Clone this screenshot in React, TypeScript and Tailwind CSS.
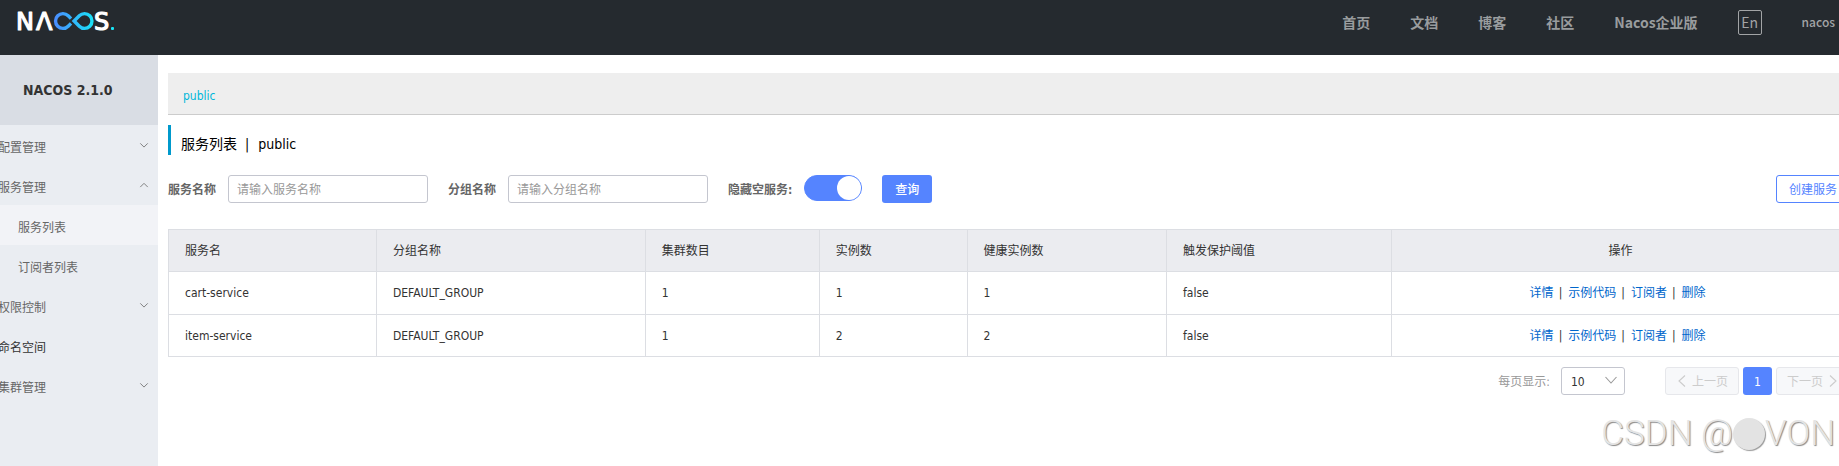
import { useState } from "react";

type MenuItem = { label: string; open?: boolean; leaf?: boolean; children?: string[] };

const NAV = ["首页", "文档", "博客", "社区", "Nacos企业版"];

const MENU: MenuItem[] = [
  { label: "配置管理" },
  { label: "服务管理", open: true, children: ["服务列表", "订阅者列表"] },
  { label: "权限控制" },
  { label: "命名空间", leaf: true },
  { label: "集群管理" },
];

const COLUMNS = [
  { label: "服务名", width: "w-[12.37%]" },
  { label: "分组名称", width: "w-[15.99%]" },
  { label: "集群数目", width: "w-[10.35%]" },
  { label: "实例数", width: "w-[8.8%]" },
  { label: "健康实例数", width: "w-[11.86%]" },
  { label: "触发保护阈值", width: "w-[13.4%]" },
];

const ROWS = [
  ["cart-service", "DEFAULT_GROUP", "1", "1", "1", "false"],
  ["item-service", "DEFAULT_GROUP", "1", "2", "2", "false"],
];

const ACTIONS = ["详情", "示例代码", "订阅者", "删除"];

function Chevron({ d, className }: { d: string; className: string }) {
  return (
    <svg className={className} viewBox="0 0 12 12" fill="none" stroke="currentColor" strokeWidth="1.1" aria-hidden="true">
      <path d={d} />
    </svg>
  );
}

function Logo() {
  return (
    <svg width="106" height="42" viewBox="0 0 106 42" role="img" aria-label="NACOS">
      <defs>
        <linearGradient id="loop" gradientUnits="userSpaceOnUse" x1="40" y1="0" x2="80" y2="0">
          <stop offset="0" stopColor="#4b8bff" />
          <stop offset="1" stopColor="#18e4f7" />
        </linearGradient>
      </defs>
      <g fill="#fff" stroke="#fff" strokeWidth="1.2" strokeLinejoin="round" fontFamily="DejaVu Sans, sans-serif" fontSize="24">
        <text x="2" y="29">N</text>
        <text x="22" y="29">Λ</text>
        <text x="80" y="29">S</text>
      </g>
      <g fill="none" stroke="url(#loop)" strokeWidth="3.4">
        <path d="M57 17.6L54.2 14.8A7.4 7.4 0 1 0 54.2 25.2L57 22.4" />
        <path d="M60.1 20L65.3 14.8A7.4 7.4 0 1 1 65.3 25.2Z" />
      </g>
      <rect x="97" y="26" width="3" height="3" rx="1" fill="#18e4f7" />
    </svg>
  );
}

function Header() {
  return (
    <header className="flex h-[55px] items-start justify-between bg-[#252a2f] font-['Noto_Sans_CJK_SC',sans-serif] text-sm text-[#a2a4a6]">
      <a href="#" className="mt-px ml-3.5">
        <Logo />
      </a>
      <nav className="mr-1 flex h-11 items-center gap-10 font-bold text-[#999c9e]">
        {NAV.map((label) => (
          <a key={label} href="#">
            {label}
          </a>
        ))}
        <button className="flex h-[25px] w-6 items-center justify-center rounded-xs border border-[#a2a4a6] font-normal text-[#a2a4a6]">
          En
        </button>
        <a href="#" className="text-xs font-medium text-[#a2a4a6]">
          nacos
        </a>
      </nav>
    </header>
  );
}

function Sidebar() {
  return (
    <aside className="w-[158px] shrink-0 bg-[#eaedf2]">
      <h1 className="h-[70px] bg-[#d9dde4] pl-[23px] text-sm leading-[70px] font-bold text-[#333]">NACOS 2.1.0</h1>
      <ul className="text-[#666]">
        {MENU.map((item) => (
          <li key={item.label}>
            <a
              href="#"
              className={`-ml-0.5 flex h-10 items-center justify-between pr-[9px] ${item.leaf ? "text-[#333]" : ""}`}
            >
              <span className="pt-1.5">{item.label}</span>
              {!item.leaf && (
                <Chevron d={item.open ? "M1.5 8.5L6 4L10.5 8.5" : "M1.5 4L6 8.5L10.5 4"} className="size-2.5 text-[#777]" />
              )}
            </a>
            {item.children?.map((child, i) => (
              <a key={child} href="#" className={`flex h-10 items-center pt-1.5 pl-[18px] ${i === 0 ? "bg-[#f2f3f7]" : ""}`}>
                {child}
              </a>
            ))}
          </li>
        ))}
      </ul>
    </aside>
  );
}

function Filters() {
  const [hideEmpty, setHideEmpty] = useState(true);
  const label = "mr-3 pt-0.5 font-bold text-[#666]";
  const input = "mr-5 h-7 w-[200px] rounded-[3px] border border-[#c4c6cf] px-2 pt-0.5 text-[#333] outline-none placeholder:text-[#999]";

  return (
    <form className="mt-5 flex items-center" onSubmit={(e) => e.preventDefault()}>
      <label htmlFor="service" className={label}>
        服务名称
      </label>
      <input id="service" placeholder="请输入服务名称" className={input} />
      <label htmlFor="group" className={label}>
        分组名称
      </label>
      <input id="group" placeholder="请输入分组名称" className={input} />
      <label htmlFor="hide-empty" className={label}>
        隐藏空服务:
      </label>
      <input
        id="hide-empty"
        type="checkbox"
        role="switch"
        checked={hideEmpty}
        onChange={(e) => setHideEmpty(e.target.checked)}
        className="mr-5 mb-0.5 flex h-[26px] w-[58px] cursor-pointer appearance-none rounded-full border border-[#5584ff] bg-[#c4c6cf] before:size-6 before:rounded-full before:bg-white checked:justify-end checked:bg-[#5584ff]"
      />
      <button className="h-7 w-[50px] rounded-[3px] bg-[#5584ff] pt-0.5 font-medium text-white">查询</button>
      <button type="button" className="ml-auto h-7 w-[74px] rounded-[3px] border border-[#5584ff] pt-0.5 text-[#5584ff]">
        创建服务
      </button>
    </form>
  );
}

function ServiceTable() {
  return (
    <table className="mt-[26px] w-full table-fixed border-collapse text-left text-[#333]">
      <thead>
        <tr className="h-[42px] bg-[#ebecf0]">
          {COLUMNS.map((col) => (
            <th key={col.label} className={`border border-[#dcdee3] px-4 font-normal ${col.width}`}>
              {col.label}
            </th>
          ))}
          <th className="border border-[#dcdee3] text-center font-normal">操作</th>
        </tr>
      </thead>
      <tbody>
        {ROWS.map((row) => (
          <tr key={row[0]} className="h-[43px] last:h-[42px]">
            {row.map((cell, i) => (
              <td key={i} className="border border-[#dcdee3] px-4">
                {cell}
              </td>
            ))}
            <td className="border border-[#dcdee3] pr-1.5 text-center">
              {ACTIONS.map((action, i) => (
                <span key={action}>
                  {i > 0 && <span className="mr-1.5 ml-[5px]">|</span>}
                  <a href="#" className="text-[#06c]">
                    {action}
                  </a>
                </span>
              ))}
            </td>
          </tr>
        ))}
      </tbody>
    </table>
  );
}

function Pager() {
  const step =
    "flex h-7 w-[74px] items-center justify-center gap-1 rounded-[3px] border border-[#e6e7eb] bg-[#f7f8fa] text-[#ccc]";

  return (
    <div className="mt-2.5 flex items-center justify-end">
      <label htmlFor="page-size" className="mr-[11px] pt-0.5 text-[#999]">
        每页显示:
      </label>
      <div className="relative mr-10">
        <select
          id="page-size"
          className="block h-7 w-16 appearance-none rounded-[3px] border border-[#c4c6cf] bg-white pt-0.5 pl-[9px] text-[#333]"
        >
          <option>10</option>
          <option>20</option>
          <option>50</option>
        </select>
        <Chevron d="M0.5 2L6 8L11.5 2" className="pointer-events-none absolute top-2 right-2 size-3 text-[#999]" />
      </div>
      <div className="flex gap-1">
        <button disabled className={step}>
          <Chevron d="M9 0.5L3 6L9 11.5" className="size-3" />
          <span className="pt-0.5">上一页</span>
        </button>
        <button className="h-7 w-[29px] rounded-[3px] bg-[#5584ff] pt-0.5 text-white">1</button>
        <button disabled className={step}>
          <span className="pt-0.5">下一页</span>
          <Chevron d="M3 0.5L9 6L3 11.5" className="size-3" />
        </button>
      </div>
    </div>
  );
}

export default function App() {
  return (
    <div className="relative flex min-h-screen flex-col overflow-hidden bg-white font-['DejaVu_Sans_Condensed','Noto_Sans_CJK_SC',sans-serif] text-xs">
      <Header />
      <div className="flex flex-1">
        <Sidebar />
        {/* the content column is a little wider than the window */}
        <main className="-mr-[11px] min-w-0 flex-1 pt-[18px] pl-2.5">
          <div className="flex h-[42px] items-center border-b border-[#ccc] bg-[#eee] pt-1 pl-[15px] text-[#00b7d9]">
            <a href="#">public</a>
          </div>
          <h2 className="mt-2.5 flex h-[30px] items-center border-l-3 border-[#09c] pt-2 pl-2.5 text-sm text-black">
            <span>服务列表</span>
            <span className="mr-[9px] ml-2">|</span>
            <span>public</span>
          </h2>
          <Filters />
          <ServiceTable />
          <Pager />
        </main>
      </div>
      <div className="absolute right-1 bottom-3 flex items-center font-['Roboto',sans-serif] text-[35px] leading-10 font-light text-[#e4e4e4] [text-shadow:1px_1px_1px_#888]">
        <span>CSDN @</span>
        <span className="size-8 rounded-full bg-[#e3e3e3] shadow-[1px_1px_1px_#999]" />
        <span>VON</span>
      </div>
    </div>
  );
}
